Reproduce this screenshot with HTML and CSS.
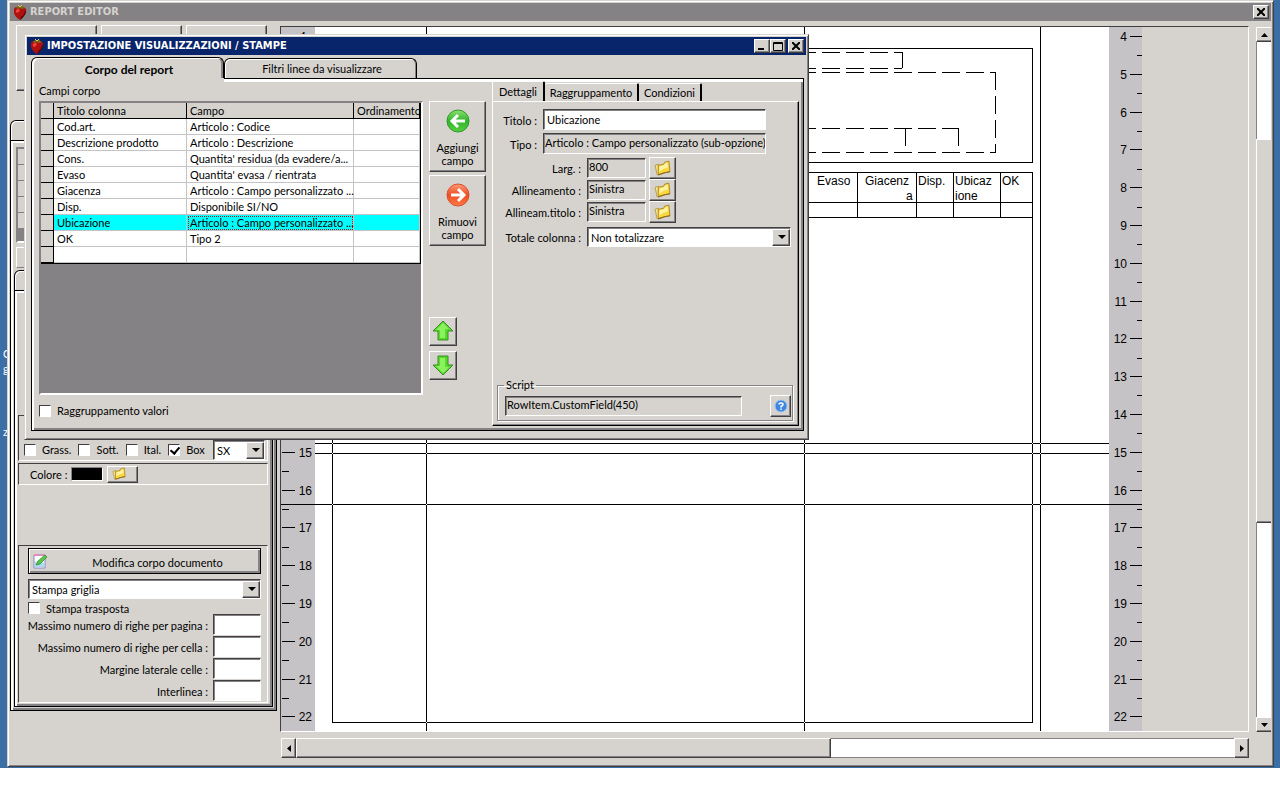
FILE: index.html
```html
<!DOCTYPE html>
<html lang="it">
<head>
<meta charset="utf-8">
<title>Report Editor</title>
<link rel="stylesheet" href="styles.css">
</head>
<body>
<svg class="defs" aria-hidden="true">
  <defs>
    <symbol id="berry" viewBox="0 0 14 16">
      <path d="M1 6Q1 3 4 3Q7 2 10 3Q14 4 13 8Q12 12 7 16Q2 13 1 9Z" fill="#b01010"/>
      <path d="M3 6Q5 4 7 6Q6 9 4 9Q2 8 3 6Z" fill="#f04038"/>
      <path d="M8 13Q12 11 12 6L13 8Q12 12 7 16Z" fill="#500404"/>
      <path d="M3 4L5 2L7 3L9 1L10 3L12 4L9 5L7 4L5 5Z" fill="#7b6a18"/>
      <path d="M5 1L7 3L9 1" stroke="#e8c860" fill="none"/>
    </symbol>
    <symbol id="folder" viewBox="0 0 16 16">
      <path d="M1 5L4 4L5 13L3 14Z" fill="#f7e48a" stroke="#a58a30" stroke-width=".7"/>
      <path d="M4 5L9 4L10 2L14 1L15 11L10 12L4 14Z" fill="#fbd63c" stroke="#a5801c" stroke-width=".8"/>
      <path d="M5 6L9 5L11 3L13 2.500L13 7Q8 8 5 11Z" fill="#fff2a0"/>
      <path d="M4 14L10 12L15 11" stroke="#8a6a20" fill="none"/>
    </symbol>
    <symbol id="up" viewBox="0 0 22 22">
      <path d="M11 1L21 11H16V20H6V11H1Z" fill="#53da2c" stroke="#3c8a28"/>
      <path d="M11 3L17 9H13V18H8V10H4Z" fill="#8bf25e"/>
    </symbol>
    <linearGradient id="g" x2="0" y2="1"><stop offset="0" stop-color="#8fe070"/><stop offset=".5" stop-color="#2eb52a"/><stop offset="1" stop-color="#58d040"/></linearGradient>
    <linearGradient id="r" x2="0" y2="1"><stop offset="0" stop-color="#ff9a78"/><stop offset=".5" stop-color="#ee4c20"/><stop offset="1" stop-color="#ff7a48"/></linearGradient>
  </defs>
</svg>

<main class="desktop">
  <span class="icon-text icon-text-a">C<br>g</span>
  <span class="icon-text icon-text-b">z</span>

  <section class="window editor">
    <header class="titlebar inactive">
      <svg class="berry"><use href="#berry"/></svg>
      <h1>REPORT EDITOR</h1>
      <button class="caption" aria-label="Chiudi"><svg viewBox="0 0 8 8"><path d="M0 0L8 8M8 0L0 8"/></svg></button>
    </header>
    <div class="editor-body">
      <aside class="side">
        <div class="tools">
          <button class="tool raised" aria-label="Strumento 1"></button>
          <button class="tool raised" aria-label="Strumento 2"></button>
          <button class="tool raised" aria-label="Strumento 3"></button>
        </div>
        <div class="side-tab"></div>
        <div class="frame outer">
          <div class="mini-grid"><i></i><i></i><i></i><i></i><i></i></div>
          <div class="mini-bar"></div>
          <div class="side-tab"></div>
          <div class="frame inner">
            <div class="group styles-row">
              <label><input type="checkbox">Grass.</label>
              <label><input type="checkbox">Sott.</label>
              <label><input type="checkbox">Ital.</label>
              <label><input type="checkbox" checked>Box</label>
              <span class="combo combo-sx"><select aria-label="Allineamento testo"><option>SX</option></select></span>
            </div>
            <div class="group colour-row">
              <span>Colore :</span><span class="swatch"></span>
              <button class="raised colour-btn" aria-label="Scegli colore"><svg><use href="#folder"/></svg></button>
            </div>
            <div class="group doc">
              <button class="edit-btn"><svg viewBox="0 0 16 16"><path d="M2 2H13V15H2Z" fill="#fff" stroke="#8a86c8"/><path d="M2 2H13" stroke="#d890c0" stroke-width="2"/><path d="M3 9L7 8L12 10V14H3Z" fill="#a8dcf0"/><path d="M4 12L6 8L13 2L15 4L8 11Z" fill="#58c848" stroke="#35802c" stroke-width=".7"/></svg><span>Modifica corpo documento</span></button>
              <span class="combo"><select aria-label="Tipo di stampa"><option>Stampa griglia</option></select></span>
              <label class="transposed"><input type="checkbox">Stampa trasposta</label>
              <div class="numbers">
                <label for="n1">Massimo numero di righe per pagina :</label><input id="n1" type="text">
                <label for="n2">Massimo numero di righe per cella :</label><input id="n2" type="text">
                <label for="n3">Margine laterale celle :</label><input id="n3" type="text">
                <label for="n4">Interlinea :</label><input id="n4" type="text">
              </div>
            </div>
          </div>
        </div>
      </aside>

      <div class="canvas">
        <svg class="sheet" viewBox="281 27 967 704" width="967" height="704">
          <path fill="#c6c3c6" d="M281 27h34v704h-34zM1109 27h33v704h-33z"/>
          <path fill="#fff" d="M315 27h794v704H315z"/>
          <g class="ink">
            <path d="M426.500 27V731M804.500 27V731M1040.500 27V731M332.500 172V722.500H1032.500V172.500H332.500M332.500 48.500H1032.500V162.500H332.500ZM315 443.500H1109M315 453.500H1109M281 504.500H1142"/>
            <path d="M332 202.500H1032M332 217.500H1032M857.500 172V217M916.500 172V217M953.500 172V217M1000.500 172V217"/>
            <path stroke-dasharray="18 6" d="M798 52.500H902M798 68.500H902M798 72.500H996M798 128.500H958M798 152.500H996M995.500 72V152"/>
            <path d="M902.500 52V68M905.500 128V146M958.500 128V146"/>
            <path d="M282 36.500h13m-13 38h13m-13 38h13m-13 37h13m-13 38h13m-13 38h13m-13 38h13m-13 38h13m-13 37h13m-13 38h13m-13 38h13m-13 38h13m-13 38h13m-13 37h13m-13 38h13m-13 38h13m-13 38h13m-13 38h13m-13 37h13"/>
            <path d="M282 471.500h7m-7 38h7m-7 38h7m-7 38h7m-7 37h7m-7 38h7m-7 38h7"/>
            <path d="M1130 36.500h12m-12 38h12m-12 38h12m-12 37h12m-12 38h12m-12 38h12m-12 38h12m-12 38h12m-12 37h12m-12 38h12m-12 38h12m-12 38h12m-12 38h12m-12 37h12m-12 38h12m-12 38h12m-12 38h12m-12 38h12m-12 37h12"/>
            <path d="M1137 55.500h5m-5 38h5m-5 38h5m-5 38h5m-5 38h5m-5 37h5m-5 38h5m-5 38h5m-5 38h5m-5 37h5m-5 38h5m-5 38h5m-5 38h5m-5 38h5m-5 38h5m-5 37h5m-5 38h5m-5 38h5"/>
          </g>
          <path class="gaps" d="M332 443.500h1m93 0h1m377 0h1m227 0h1m7 0h1M332 453.500h1m93 0h1m377 0h1m227 0h1m7 0h1M332 504.500h1m93 0h1m377 0h1m227 0h1m7 0h1M426 722.500h1m377 0h1"/>
          <g class="num left">
            <text x="306" y="41">4</text><text x="312" y="457">15</text><text x="312" y="495">16</text><text x="312" y="532">17</text><text x="312" y="570">18</text><text x="312" y="608">19</text><text x="312" y="646">20</text><text x="312" y="684">21</text><text x="312" y="721">22</text>
          </g>
          <g class="num">
            <text x="1127" y="41">4</text><text x="1127" y="79">5</text><text x="1127" y="117">6</text><text x="1127" y="154">7</text><text x="1127" y="192">8</text><text x="1127" y="230">9</text><text x="1127" y="268">10</text><text x="1127" y="306">11</text><text x="1127" y="343">12</text><text x="1127" y="381">13</text><text x="1127" y="419">14</text><text x="1127" y="457">15</text><text x="1127" y="495">16</text><text x="1127" y="532">17</text><text x="1127" y="570">18</text><text x="1127" y="608">19</text><text x="1127" y="646">20</text><text x="1127" y="684">21</text><text x="1127" y="721">22</text>
          </g>
          <g class="cols">
            <text x="817" y="185">Evaso</text><text x="865" y="185">Giacenz</text><text x="906" y="200">a</text><text x="918" y="185">Disp.</text><text x="955" y="185">Ubicaz</text><text x="955" y="200">ione</text><text x="1002" y="185">OK</text>
          </g>
        </svg>
      </div>
      <div class="vbar">
        <button class="raised arrow" aria-label="Su"><svg viewBox="0 0 7 4"><path d="M0 4L3.500 0L7 4Z"/></svg></button>
        <i class="track v1"></i><i class="raised v2"></i><i class="track v3"></i>
        <button class="raised arrow" aria-label="Giù"><svg viewBox="0 0 7 4"><path d="M0 0L3.500 4L7 0Z"/></svg></button>
      </div>
      <div class="hbar">
        <button class="raised arrow" aria-label="Sinistra"><svg class="tall" viewBox="0 0 4 7"><path d="M4 0L0 3.500L4 7Z"/></svg></button>
        <i class="raised h1"></i><i class="track h2"></i>
        <button class="raised arrow" aria-label="Destra"><svg class="tall" viewBox="0 0 4 7"><path d="M0 0L4 3.500L0 7Z"/></svg></button>
      </div>
    </div>
  </section>

  <section class="window dialog">
    <header class="titlebar">
      <svg class="berry"><use href="#berry"/></svg>
      <h2>IMPOSTAZIONE VISUALIZZAZIONI / STAMPE</h2>
      <button class="caption" aria-label="Riduci"><svg viewBox="0 0 8 8"><path d="M0 7H6"/></svg></button>
      <button class="caption" aria-label="Ingrandisci"><svg class="max" viewBox="0 0 10 9"><path d="M.5 .5H9.500V8.500H.5ZM0 1.500H10"/></svg></button>
      <button class="caption last" aria-label="Chiudi"><svg viewBox="0 0 8 8"><path d="M0 0L8 8M8 0L0 8"/></svg></button>
    </header>
    <nav class="tabs">
      <button class="tab active">Corpo del report</button>
      <button class="tab">Filtri linee da visualizzare</button>
    </nav>
    <div class="page">
      <div class="fields">
        <div class="caption-text">Campi corpo</div>
        <div class="grid-box">
          <table>
            <colgroup><col class="c0"><col class="c1"><col class="c2"><col class="c3"></colgroup>
            <thead><tr><th></th><th>Titolo colonna</th><th>Campo</th><th>Ordinamento</th></tr></thead>
            <tbody>
              <tr><th></th><td>Cod.art.</td><td>Articolo : Codice</td><td></td></tr>
              <tr><th></th><td>Descrizione prodotto</td><td>Articolo : Descrizione</td><td></td></tr>
              <tr><th></th><td>Cons.</td><td>Quantita' residua (da evadere/a...</td><td></td></tr>
              <tr><th></th><td>Evaso</td><td>Quantita' evasa / rientrata</td><td></td></tr>
              <tr><th></th><td>Giacenza</td><td>Articolo : Campo personalizzato ...</td><td></td></tr>
              <tr><th></th><td>Disp.</td><td>Disponibile SI/NO</td><td></td></tr>
              <tr class="selected"><th></th><td>Ubicazione</td><td class="focus">Articolo : Campo personalizzato ...</td><td></td></tr>
              <tr><th></th><td>OK</td><td>Tipo 2</td><td></td></tr>
              <tr><th></th><td></td><td></td><td></td></tr>
            </tbody>
          </table>
        </div>
        <label class="group-values"><input type="checkbox">Raggruppamento valori</label>
      </div>
      <div class="actions">
        <button class="raised big"><svg viewBox="0 0 24 24"><circle cx="12" cy="12" r="11" fill="url(#g)" stroke="#2f9a2c"/><path d="M19 12H6M12 6L6 12L12 18" stroke="#fff" stroke-width="3" fill="none"/></svg>Aggiungi<br>campo</button>
        <button class="raised big"><svg viewBox="0 0 24 24"><circle cx="12" cy="12" r="11" fill="url(#r)" stroke="#d85030"/><path d="M5 12H18M12 6L18 12L12 18" stroke="#fff" stroke-width="3" fill="none"/></svg>Rimuovi<br>campo</button>
        <button class="raised move first" aria-label="Sposta su"><svg><use href="#up"/></svg></button>
        <button class="raised move" aria-label="Sposta giù"><svg class="flip"><use href="#up"/></svg></button>
      </div>
      <div class="details">
        <nav class="subtabs">
          <button class="subtab current">Dettagli</button><button class="subtab">Raggruppamento</button><button class="subtab">Condizioni</button>
        </nav>
        <div class="subpage">
          <div class="row wide"><label for="titolo">Titolo :</label><input id="titolo" type="text" value="Ubicazione"></div>
          <div class="row wide"><label for="tipo">Tipo :</label><input id="tipo" class="ro" type="text" readonly value="Articolo : Campo personalizzato (sub-opzione)"></div>
          <div class="row small"><label for="larg">Larg. :</label><input id="larg" class="ro" type="text" readonly value="800"><button class="raised pick" aria-label="Scegli larghezza"><svg><use href="#folder"/></svg></button></div>
          <div class="row small"><label for="all">Allineamento :</label><input id="all" class="ro" type="text" readonly value="Sinistra"><button class="raised pick" aria-label="Scegli allineamento"><svg><use href="#folder"/></svg></button></div>
          <div class="row small"><label for="allt">Allineam.titolo :</label><input id="allt" class="ro" type="text" readonly value="Sinistra"><button class="raised pick" aria-label="Scegli allineamento titolo"><svg><use href="#folder"/></svg></button></div>
          <div class="row total"><label for="tot">Totale colonna :</label><span class="combo"><select id="tot"><option>Non totalizzare</option></select></span></div>
          <fieldset class="script">
            <legend>Script</legend>
            <input class="ro" type="text" readonly aria-label="Script" value="RowItem.CustomField(450)">
            <button class="raised help" aria-label="Aiuto"><svg viewBox="0 0 14 14"><circle cx="7" cy="7" r="6" fill="#3f86e0" stroke="#9cc4f0"/><path d="M5 5.500Q5 4 7 4T9 5.500Q9 6.500 7 7.500V8.500M7 9.500V11" stroke="#fff" stroke-width="1.500" fill="none"/></svg></button>
          </fieldset>
        </div>
      </div>
    </div>
  </section>
</main>
</body>
</html>
```
FILE: styles.css
```css
* { box-sizing: border-box; }
body {
  margin: 0;
  background: #fff;
  color: #000;
  font: 11px/13px Lato, "Liberation Sans", Arial, sans-serif;
}
button, input, select { font: inherit; color: inherit; margin: 0; padding: 0; border-radius: 0; }
h1, h2 { margin: 0; font: bold 11px/16px "DejaVu Sans Condensed", Tahoma, sans-serif; flex: 1; }
i { display: block; }
.defs { position: absolute; width: 0; height: 0; }

.desktop {
  position: relative;
  display: flex;
  height: 96vh;
  min-height: 768px;
  padding: 0 6px 1px 7px;
  background: #3a6ea5;
  overflow: hidden;
}
.icon-text { position: absolute; left: 3px; color: #fff; line-height: 15px; }
.icon-text-a { top: 346px; }
.icon-text-b { top: 424px; }

.window { background: #d6d3ce; border: 1px solid; border-color: #d6d3ce #404040 #404040 #d6d3ce; box-shadow: inset 1px 1px #fff, inset -1px -1px #848284; padding: 2px; }
.editor { position: relative; flex: 1; display: flex; flex-direction: column; min-width: 0; }
.titlebar { display: flex; align-items: center; height: 18px; padding: 0 2px; background: #08246b; color: #fff; }
.titlebar.inactive { background: #848284; color: #d6d3ce; }
.berry { width: 14px; height: 16px; margin: 0 3px 0 1px; }
.raised, .caption {
  background: #d6d3ce;
  border: 1px solid;
  border-color: #fff #404040 #404040 #fff;
  box-shadow: inset -1px -1px #848284;
}
.caption { width: 16px; height: 14px; display: flex; align-items: center; justify-content: center; }
.caption svg { width: 8px; height: 8px; fill: none; stroke: #000; stroke-width: 2; }
.caption .max { width: 10px; height: 9px; stroke-width: 1; }
.caption.last { margin-left: 2px; }

.editor-body {
  flex: 1;
  display: grid;
  grid-template-columns: 267px minmax(0, 1fr) 16px;
  grid-template-rows: minmax(0, 1fr) 20px;
  gap: 6px 0;
  padding: 4px 0 6px;
  min-height: 0;
}
.side { grid-row: 1 / 3; }
.tools { display: flex; gap: 4px; padding-left: 6px; margin-bottom: 29px; }
.tool { width: 81px; height: 66px; }
.side-tab { width: 120px; height: 20px; border: 1px solid #000; border-bottom: 0; border-radius: 6px 6px 0 0; box-shadow: inset 1px 1px #fff; }
.frame { border: 1px solid #000; box-shadow: inset 2px 2px #fff, inset -2px -2px #848284; }
.outer { padding: 6px 3px 3px; }
.inner { padding: 124px 4px 3px 3px; }
.mini-grid { height: 96px; margin: 0 2px 4px; background: #848284; border: 2px solid; border-color: #848284 #fff #fff #848284; }
.mini-grid i { height: 16px; border-bottom: 1px solid #848284; background: #d6d3ce; }
.mini-bar { height: 21px; margin: 0 2px 2px; border: 1px solid; border-color: #fff #848284 #848284 #fff; }
.group { border: 1px solid; border-color: #404040 #fff #fff #404040; display: flex; }
.group label { display: flex; align-items: center; gap: 6px; }

input[type="checkbox"] {
  appearance: none;
  width: 12px;
  height: 12px;
  background: #fff;
  border: 1px solid;
  border-color: #404040 #fff #fff #404040;
  flex: none;
}
input[type="checkbox"]:checked { position: relative; }
input[type="checkbox"]:checked::after { content: ""; position: absolute; left: 3px; top: 0; width: 4px; height: 7px; border: solid #000; border-width: 0 2px 2px 0; transform: rotate(40deg); }
input[type="text"] {
  background: #fff;
  border: 1px solid;
  border-color: #404040 #fff #fff #404040;
  box-shadow: inset 1px 1px #848284;
  padding: 0 3px;
  min-width: 0;
}
input[type="text"].ro { background: #d6d3ce; padding: 0 0 3px 1px; }
.combo { position: relative; display: flex; height: 20px; background: #fff; border: 1px solid; border-color: #404040 #fff #fff #404040; box-shadow: inset 1px 1px #848284; }
.combo select { appearance: none; border: 0; background: transparent; width: 100%; padding: 0 18px 0 3px; }
.combo::before { content: ""; position: absolute; right: 0; top: 1px; bottom: 0; width: 16px; background: #d6d3ce; border: 1px solid; border-color: #fff #404040 #404040 #fff; box-shadow: inset -1px -1px #848284; }
.combo::after { content: ""; position: absolute; right: 4px; top: 7px; border: 4px solid transparent; border-top-color: #000; border-bottom: 0; }

.styles-row { height: 46px; padding: 0 2px 0 5px; align-items: flex-end; gap: 7px; }
.styles-row label { padding-bottom: 4px; }
.combo-sx { width: 52px; margin-left: auto; }
.colour-row { height: 22px; margin-top: 2px; padding-left: 11px; align-items: center; gap: 4px; }
.swatch { width: 32px; height: 14px; background: #000; border: 1px solid; border-color: #848284 #fff #fff #848284; }
.colour-btn { width: 31px; height: 17px; padding-left: 3px; display: flex; }
.colour-btn svg { width: 16px; height: 14px; }
.doc { flex-direction: column; margin-top: 60px; padding: 2px 6px 0 9px; }
.edit-btn { display: flex; align-items: center; height: 26px; background: #d6d3ce; border: 1px solid #000; box-shadow: inset 1px 1px #fff, inset -2px -2px #848284; padding: 0 3px; }
.edit-btn svg { width: 16px; height: 16px; }
.edit-btn span { flex: 1; padding: 2px 0 0 10px; }
.doc .combo { margin-top: 5px; }
.doc .transposed { margin: 3px 0 0; height: 12px; }
.numbers { display: grid; grid-template-columns: minmax(0, 1fr) 48px; column-gap: 5px; }
.numbers label { justify-content: flex-end; height: 22px; white-space: nowrap; }
.numbers input { height: 21px; }

.canvas { margin: 1px 6px 0 3px; border: 1px solid; border-color: #404040 #fff #fff #404040; overflow: hidden; }
.sheet { display: block; }
.ink { fill: none; stroke: #000; shape-rendering: crispEdges; }
.gaps { stroke: #fff; shape-rendering: crispEdges; }
.num { font: 12px "Liberation Sans", Arial, sans-serif; text-anchor: end; }
.cols { font: 12px "Liberation Sans", Arial, sans-serif; }
.arrow { display: flex; align-items: center; justify-content: center; flex: none; }
.arrow svg { width: 7px; height: 4px; }
.arrow svg.tall { width: 4px; height: 7px; }
.track { background: #fff; border: 1px solid #848284; }
.vbar { display: flex; flex-direction: column; margin: 2px 0 0 1px; }
.vbar .arrow { height: 15px; }
.vbar .raised { border-right-width: 0; box-shadow: inset 0 -1px #848284; }
.vbar .track { border-width: 0 0 0 1px; }
.v1 { flex: 97; } .v2 { flex: 383; } .v3 { flex: 195; }
.hbar { grid-column: 2; display: flex; margin: 0 6px 0 4px; }
.hbar .arrow { width: 15px; }
.hbar .track { border-width: 1px 0; }
.h1 { flex: 534; } .h2 { flex: 404; }

.dialog { position: absolute; left: 24px; top: 34px; }
.tabs { display: flex; align-items: flex-end; padding: 2px 4px 0; position: relative; z-index: 1; }
.tab { width: 193px; height: 20px; padding: 0 0 0 3px; background: #d6d3ce; border: 1px solid #000; border-bottom: 0; border-radius: 6px 6px 0 0; box-shadow: inset 1px 1px #fff, inset -1px 0 #848284; }
.tab.active { font: bold 12px/14px Lato, "Liberation Sans", sans-serif; height: 21px; padding-top: 3px; box-shadow: inset 2px 1px #fff, inset -2px 0 #848284; }
.page { display: grid; grid-template-columns: 384px 57px 307px; column-gap: 6px; margin: 0 2px 6px 4px; padding: 2px 4px 4px 7px; border: 1px solid #000; border-top: 0; box-shadow: inset 2px 0 #fff, inset -2px -2px #848284; position: relative; }
.page::before { content: ""; position: absolute; left: 192px; right: 0; top: 0; height: 3px; background: #fff; border-top: 1px solid #000; }
.fields, .actions, .details { position: relative; }
.caption-text { padding-top: 4px; height: 21px; }
.grid-box { height: 294px; background: #848284; border: 2px solid; border-color: #848284 #fff #fff #848284; }
table { width: 100%; table-layout: fixed; border-collapse: separate; border-spacing: 0; border-right: 1px solid #000; border-bottom: 1px solid #000; }
.c0 { width: 13px; } .c1 { width: 133px; } .c2 { width: 167px; }
th, td { height: 16px; padding: 0 0 0 3px; text-align: left; font-weight: normal; line-height: 14px; white-space: nowrap; border-right: 1px solid #c6c3c6; border-bottom: 1px solid #c6c3c6; }
td { background: #fff; }
th { background: #d6d3ce; border-color: #000; }
.selected td { background: #0ff; }
.focus { outline: 1px dotted #a02020; outline-offset: -2px; }
.group-values { display: flex; align-items: center; gap: 6px; margin-top: 9px; }
.actions { padding-top: 21px; display: flex; flex-direction: column; align-items: flex-start; }
.big { width: 57px; height: 71px; margin-bottom: 3px; padding: 3px 0 0; line-height: 13px; }
.big svg { display: block; width: 24px; height: 24px; margin: 0 auto 8px; }
.move { width: 28px; height: 29px; margin-bottom: 5px; padding: 2px; display: flex; }
.move.first { margin-top: 68px; }
.move svg { width: 22px; height: 22px; }
.move .flip { transform: scaleY(-1); }

.subtabs { display: flex; align-items: flex-end; height: 21px; }
.subtab { height: 18px; width: 94px; padding: 0; background: #d6d3ce; border: solid; border-width: 1px 2px 0 0; border-color: #fff #000 #fff #fff; border-radius: 2px 2px 0 0; }
.subtab.current { width: 53px; height: 20px; border-left-width: 1px; padding-bottom: 1px; }
.subtab:last-child { width: 63px; }
.subpage { border: 1px solid; border-color: #fff #000 #000 #fff; box-shadow: inset -1px -1px #848284; padding: 7px 5px 4px 4px; height: 325px; display: flex; flex-direction: column; }
.row { display: grid; grid-template-columns: 84px 1fr; column-gap: 6px; align-items: center; }
.row label { text-align: right; white-space: nowrap; padding-top: 1px; }
.wide { grid-template-columns: 40px 223px; margin-bottom: 3px; }
.wide input { height: 21px; }
.small { grid-template-columns: 84px 59px 27px; height: 22px; }
.small input { height: 20px; }
.small .pick { margin-left: -3px; }
.pick { width: 27px; height: 22px; padding: 0 4px; display: flex; align-items: center; }
.pick svg { width: 17px; height: 17px; }
.total { margin: 4px 2px 0 0; }
.script { margin: auto 0 0; padding: 4px 1px 3px 7px; border: 1px solid #848284; box-shadow: 1px 1px #fff, inset 1px 1px #fff; display: flex; justify-content: space-between; align-items: center; min-width: 0; }
.script legend { padding: 0 2px; margin-left: -1px; line-height: 12px; }
.script input { width: 237px; height: 20px; }
.help { width: 21px; height: 22px; display: flex; align-items: center; justify-content: center; }
.help svg { width: 14px; height: 14px; }
```
